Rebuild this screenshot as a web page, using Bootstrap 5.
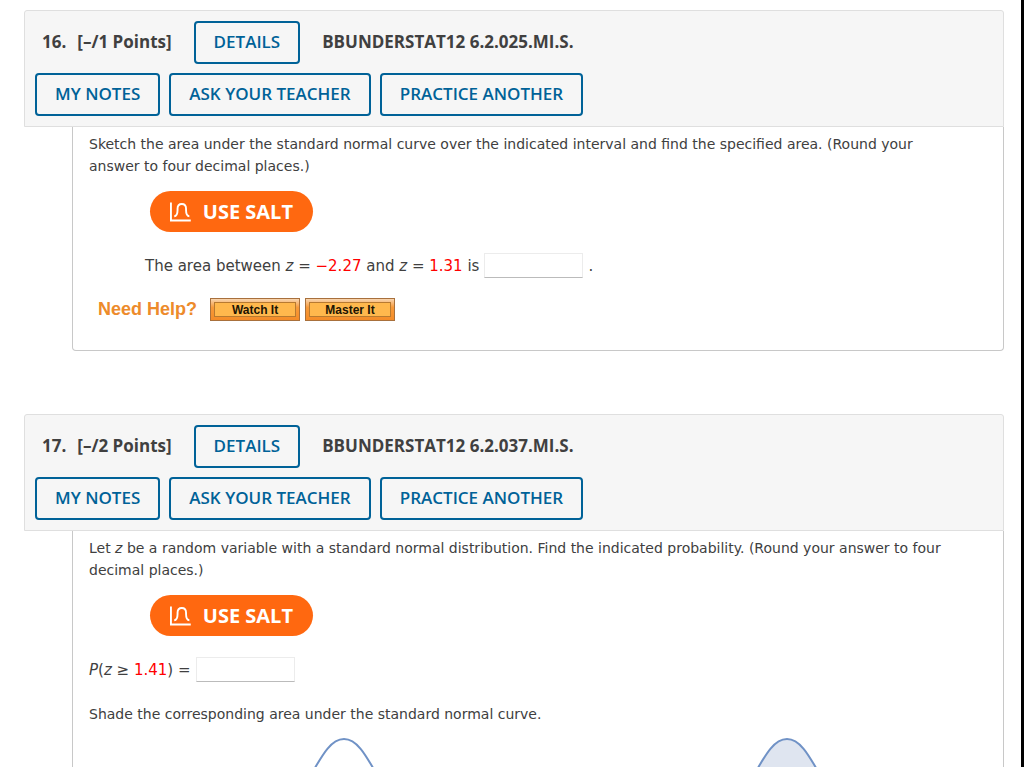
<!DOCTYPE html>
<html lang="en">
<head>
<meta charset="utf-8">
<meta name="viewport" content="width=device-width, initial-scale=1">
<title>Homework – 6.2</title>
<link href="https://cdn.jsdelivr.net/npm/bootstrap@5.3.0/dist/css/bootstrap.min.css" rel="stylesheet">
<style>
  body { height: 100vh; overflow: hidden; background: #fff; border-right: 3px solid #000; color: #404040; font: 14px/22px Verdana, "DejaVu Sans", sans-serif; }
  main { padding: 10px 17px 0 24px; }
  .question + .question { margin-top: 63px; }
  .q-head { background: #f6f6f6; border: 1px solid #dfdfdf; border-radius: 3px 3px 0 0; padding: 10px; font: 700 17px/22px "Open Sans", sans-serif; }
  .q-row { gap: 9px; }
  .q-row + .q-row { margin-top: 9px; }
  .q-title, .q-code { padding-bottom: 2px; }
  .q-title { font: inherit; gap: 11px; margin: 0 13px 0 7px; }
  .q-code { margin-left: 13px; }
  .btn-tool { --bs-btn-color: #006298; --bs-btn-border-color: #006298; --bs-btn-border-width: 2px; --bs-btn-border-radius: 4px; --bs-btn-hover-color: #fff; --bs-btn-hover-bg: #006298; --bs-btn-font-size: 17px; --bs-btn-font-weight: 600; height: 43px; padding: 0 18px 2px; }
  .q-body { margin-left: 48px; border: 1px solid #c8c8c8; border-top: 0; border-radius: 0 0 4px 4px; padding: 6px 16px 29px; }
  .btn-salt { --bs-btn-color: #fff; --bs-btn-bg: #ff6810; --bs-btn-hover-color: #fff; --bs-btn-hover-bg: #e65a08; --bs-btn-border-width: 0; --bs-btn-padding-x: 20px; --bs-btn-padding-y: 0; width: 163px; height: 41px; margin: 14px 0 21px 61px; font: 700 20px/24px "Open Sans", sans-serif; gap: 12px; white-space: nowrap; }
  .answer { min-height: 25px; gap: 5px; font-size: 15px; }
  .answer .form-control { width: 99px; height: 25px; padding: 0 4px; font-size: 15px; border: 1px solid #ececec; border-bottom-color: #bbb; border-radius: 0; }
  .indent { margin-left: 56px; }
  .value { color: #f00; }
  .help { margin: 19px 0 0 9px; gap: 5px; }
  .help-label { color: #ed8b2b; font: 700 18px/24px "Liberation Sans", sans-serif; margin-right: 8px; }
  .btn-help { width: 90px; height: 23px; padding: 3px; border: 1px solid #a8703c; border-radius: 0; background: linear-gradient(#f8d5b0, #f79a3a 40%, #f48c28); }
  .btn-help span { display: block; height: 15px; border: 1px solid #b87a30; background: #ffb84d; color: #1c1403; font: 700 12px/14px "Liberation Sans", sans-serif; }
  .shade { margin: 21px 0 12px; }
  .curves { gap: 223px; padding-left: 145px; }
  .curves svg { flex: none; width: 220px; height: 110px; }
</style>
</head>
<body>
<main>
  <section class="question">
    <header class="q-head">
      <div class="q-row d-flex align-items-center">
        <h2 class="q-title d-flex"><span>16.</span><span>[–/1 Points]</span></h2>
        <button type="button" class="btn btn-tool">DETAILS</button>
        <span class="q-code">BBUNDERSTAT12 6.2.025.MI.S.</span>
      </div>
      <div class="q-row d-flex">
        <button type="button" class="btn btn-tool">MY NOTES</button>
        <button type="button" class="btn btn-tool">ASK YOUR TEACHER</button>
        <button type="button" class="btn btn-tool">PRACTICE ANOTHER</button>
      </div>
    </header>
    <div class="q-body">
      <p class="mb-0">Sketch the area under the standard normal curve over the indicated interval and find the specified area. (Round your<br>answer to four decimal places.)</p>
      <button type="button" class="btn btn-salt rounded-pill d-flex align-items-center">
        <svg width="22" height="20" viewBox="0 0 22 20" fill="none" stroke="#fff" stroke-width="2" aria-hidden="true"><path d="M1 0V19H22"/><path d="M4.500 14.500C7.500 14.500 8 12 8 8V6.500C8 3 9.500 1.500 12.500 1.500S17 3 17 6.500V8C17 12 17.500 14.500 20.500 14.500"/></svg>
        <span>USE SALT</span>
      </button>
      <div class="answer indent d-flex align-items-center">
        <label for="area">The area between <i>z</i> = <span class="value">−2.27</span> and <i>z</i> = <span class="value">1.31</span> is</label>
        <input id="area" type="text" class="form-control"><span>.</span>
      </div>
      <div class="help d-flex align-items-center">
        <span class="help-label">Need Help?</span>
        <button type="button" class="btn-help"><span>Watch It</span></button>
        <button type="button" class="btn-help"><span>Master It</span></button>
      </div>
    </div>
  </section>

  <section class="question">
    <header class="q-head">
      <div class="q-row d-flex align-items-center">
        <h2 class="q-title d-flex"><span>17.</span><span>[–/2 Points]</span></h2>
        <button type="button" class="btn btn-tool">DETAILS</button>
        <span class="q-code">BBUNDERSTAT12 6.2.037.MI.S.</span>
      </div>
      <div class="q-row d-flex">
        <button type="button" class="btn btn-tool">MY NOTES</button>
        <button type="button" class="btn btn-tool">ASK YOUR TEACHER</button>
        <button type="button" class="btn btn-tool">PRACTICE ANOTHER</button>
      </div>
    </header>
    <div class="q-body">
      <p class="mb-0">Let <i>z</i> be a random variable with a standard normal distribution. Find the indicated probability. (Round your answer to four<br>decimal places.)</p>
      <button type="button" class="btn btn-salt rounded-pill d-flex align-items-center">
        <svg width="22" height="20" viewBox="0 0 22 20" fill="none" stroke="#fff" stroke-width="2" aria-hidden="true"><path d="M1 0V19H22"/><path d="M4.500 14.500C7.500 14.500 8 12 8 8V6.500C8 3 9.500 1.500 12.500 1.500S17 3 17 6.500V8C17 12 17.500 14.500 20.500 14.500"/></svg>
        <span>USE SALT</span>
      </button>
      <div class="answer d-flex align-items-center">
        <label for="prob"><i>P</i>(<i>z</i> ≥ <span class="value">1.41</span>) =</label>
        <input id="prob" type="text" class="form-control">
      </div>
      <p class="shade">Shade the corresponding area under the standard normal curve.</p>
      <div class="curves d-flex">
        <svg viewBox="-110 -2 220 110" fill="none" stroke="#7092c6" stroke-width="2" role="img" aria-label="Normal curve"><path d="M-105 99C-65 99-47 60-35 39.300C-23 18.500-14 0 0 0C14 0 23 18.500 35 39.300C47 60 65 99 105 99"/></svg>
        <svg viewBox="-110 -2 220 110" fill="#dfe5f0" stroke="#7092c6" stroke-width="2" role="img" aria-label="Normal curve, shaded"><path d="M-105 99C-65 99-47 60-35 39.300C-23 18.500-14 0 0 0C14 0 23 18.500 35 39.300C47 60 65 99 105 99"/></svg>
      </div>
    </div>
  </section>
</main>
<script src="https://cdn.jsdelivr.net/npm/bootstrap@5.3.0/dist/js/bootstrap.bundle.min.js"></script>
</body>
</html>
